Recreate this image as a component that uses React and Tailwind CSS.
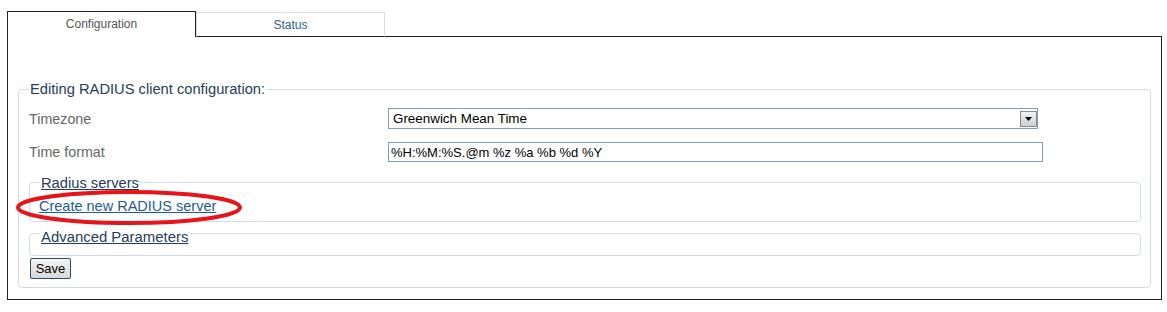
export default function App() {
  return (
    <div className="relative h-[312px] w-[1167px] bg-white font-['Liberation_Sans',Arial,sans-serif]">
      <div className="ml-[7px] w-[1155px] pt-[11px]">
        <div className="flex">
          <div className="h-[26px] w-[189px] border-x border-t border-[#202020] pt-[5px] text-center text-[12px] leading-[14px] text-[#555]">
            Configuration
          </div>
          <div className="mt-[1px] h-[25px] w-[189px] border-x border-t border-b border-x-[#d8dce6] border-t-[#d8dce6] border-b-[#202020] pt-[5px] text-center text-[12px] leading-[14px] text-[#2e5f8f]">
            Status
          </div>
          <div className="h-[26px] flex-1 border-b border-[#202020]"></div>
        </div>
        <div className="border-x border-b border-[#202020] pl-[10px] pr-[10px] pt-[44px] pb-[11px]">
          <fieldset className="rounded-[4px] border border-[#d3dbe5] pl-[10px] pr-[9px] pb-[8px]">
            <legend className="px-[1px] text-[14.7px] leading-[16px] text-[#253d5b]">
              Editing RADIUS client configuration:
            </legend>
            <div className="mt-[11px] flex h-[21px] items-center">
              <div className="w-[359px] text-[14.3px] leading-[16px] text-[#666]">Timezone</div>
              <div className="flex h-[21px] w-[650px] items-center justify-between border border-[#7f9db9] pl-[4px] pr-0 text-[13.4px] leading-[15px] text-black">
                <span>Greenwich Mean Time</span>
                <span className="mt-[1px] flex h-[16px] w-[17px] items-center justify-center border border-[#8b8b8b] bg-gradient-to-b from-[#f2f2f2] to-[#cfcfcf]">
                  <svg width="7" height="4" viewBox="0 0 7 4">
                    <path d="M0 0 H7 L3.5 4 Z" fill="#000" />
                  </svg>
                </span>
              </div>
            </div>
            <div className="mt-[13px] flex h-[20px] items-center">
              <div className="w-[359px] text-[14.3px] leading-[16px] text-[#666]">Time format</div>
              <div className="flex h-[20px] w-[655px] items-center border border-[#7f9db9] pl-[2px] text-[13px] leading-[15px] text-black">
                %H:%M:%S.@m %z %a %b %d %Y
              </div>
            </div>
            <fieldset className="mt-[11px] rounded-[4px] border border-[#d3dbe5] pl-[10px] pr-[10px] pb-[7px]">
              <legend className="px-[1px] pt-[2px] text-[14.7px] leading-[16px] text-[#253d5b] underline">
                Radius servers
              </legend>
              <a href="#" className="-ml-[1px] mt-[7px] block w-fit text-[14.5px] leading-[16px] text-[#1d5c98] underline">
                Create new RADIUS server
              </a>
            </fieldset>
            <fieldset className="rounded-[4px] border border-[#d3dbe5] pl-[10px] pr-[10px]">
              <legend className="px-[1px] pt-[7px] text-[14.9px] leading-[16px] text-[#253d5b] underline">
                Advanced Parameters
              </legend>
              <div className="h-[10px]"></div>
            </fieldset>
            <button className="ml-[1px] mt-[2px] flex h-[21px] w-[41px] items-center justify-center rounded-[2px] border border-[#2a4d6e] bg-gradient-to-b from-[#f4f4f4] to-[#d8d8d8] text-[13px] leading-[15px] text-black">
              Save
            </button>
          </fieldset>
        </div>
      </div>
      <svg className="pointer-events-none absolute left-[14px] top-[188px]" width="232" height="40" viewBox="0 0 232 40">
        <ellipse cx="115" cy="19.5" rx="111" ry="15.5" fill="none" stroke="#e8141c" strokeWidth="4" />
      </svg>
    </div>
  );
}
